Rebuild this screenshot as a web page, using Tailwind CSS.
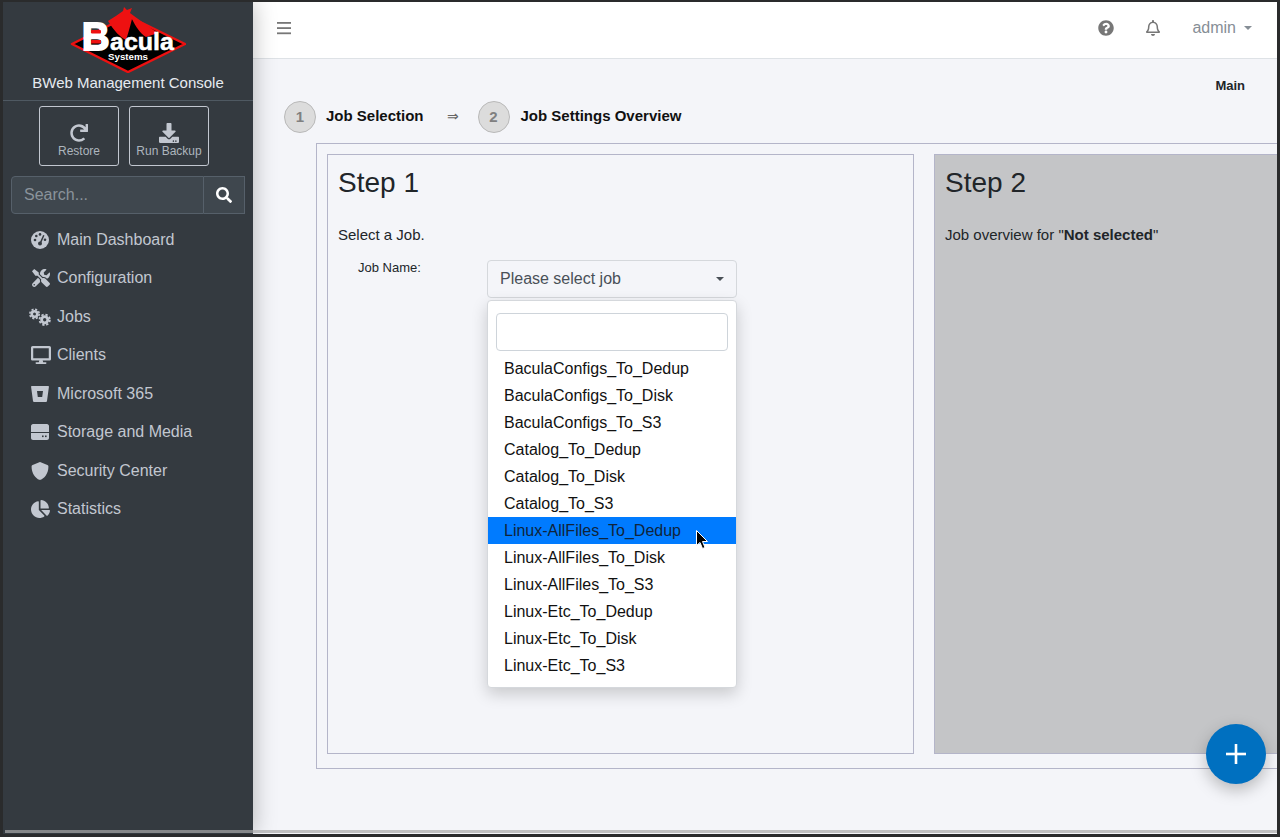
<!DOCTYPE html>
<html>
<head>
<meta charset="utf-8">
<title>BWeb Management Console</title>
<script src="https://cdn.jsdelivr.net/npm/@tailwindcss/browser@4"></script>
</head>
<body class="m-0 overflow-hidden">
<div class="relative w-[1280px] h-[837px] overflow-hidden bg-[#2a2b2c] pl-[3px] pr-[3px] pt-[2px] pb-[3px] font-['Liberation_Sans',Arial,sans-serif] text-[#212529] text-[15px]">
  <div class="relative flex h-full w-full overflow-hidden bg-[#f4f5f9]">
    <!-- sidebar -->
    <aside class="relative z-10 w-[250px] shrink-0 bg-[#343a40] shadow-[0_0_22px_rgba(0,0,0,0.28)] flex flex-col">
      <div class="h-[99px] shrink-0 border-b border-[#4f5962] flex flex-col items-center">
        <svg class="mt-[5px] block" width="116" height="66" viewBox="0 0 116 66">
          <polygon points="2,37 58,9 115,37 58,65" fill="#000" stroke="#ee1111" stroke-width="2.5" stroke-linejoin="round"/>
          <path d="M38 14 C44 10 49 7 53 4 L54 0 L57 3 L62 1 L60 6 C68 12 76 18 88 26 L76 30 C70 26 66 20 62 12 C60 20 58 27 56 33 C50 30 44 24 38 14 Z" fill="#ee1111"/>
          <text x="12" y="43" font-family="Liberation Sans" font-weight="700" font-size="38" fill="#fff" stroke="#fff" stroke-width="2">B</text>
          <rect x="21" y="23" width="10" height="3.5" rx="1" fill="#ee1111"/>
          <rect x="21" y="33" width="10" height="3.5" rx="1" fill="#ee1111"/>
          <text x="40" y="43" font-family="Liberation Sans" font-weight="700" font-size="23" textLength="64" lengthAdjust="spacingAndGlyphs" fill="#fff" stroke="#fff" stroke-width="0.5">acula</text>
          <text x="38" y="53" font-family="Liberation Sans" font-weight="700" font-size="9" textLength="40" lengthAdjust="spacingAndGlyphs" fill="#fff">Systems</text>
        </svg>
        <div class="text-[15px] leading-[20px] text-[#e6eaf0] whitespace-nowrap">BWeb Management Console</div>
      </div>
      <div class="flex gap-[10px] pt-[5px] pl-[36px]">
        <a class="w-[80px] h-[60px] border border-[#c2c7d0] rounded-[3px] flex flex-col items-center justify-center text-[#adb5bd] text-[12px] leading-[14px]">
          <svg class="w-[18px] h-[18px] mt-[9px] mb-[2px]" viewBox="0 0 512 512" fill="#c2c7d0"><path d="M500.33 0h-47.41a12 12 0 0 0-12 12.57l4 82.76A247.42 247.42 0 0 0 256 8C119.34 8 7.9 119.53 8 256.19 8.1 393.07 119.1 504 256 504a247.1 247.1 0 0 0 166.18-63.91 12 12 0 0 0 .48-17.43l-34-34a12 12 0 0 0-16.38-.55A176 176 0 1 1 402.1 157.8l-101.53-4.87a12 12 0 0 0-12.57 12v47.41a12 12 0 0 0 12 12h200.33a12 12 0 0 0 12-12V12a12 12 0 0 0-12-12z"/></svg>
          <span>Restore</span>
        </a>
        <a class="w-[80px] h-[60px] border border-[#c2c7d0] rounded-[3px] flex flex-col items-center justify-center text-[#adb5bd] text-[12px] leading-[14px]">
          <svg class="w-[20px] h-[20px] mt-[9px] mb-[1px]" viewBox="0 0 512 512" fill="#c2c7d0"><path d="M216 0h80c13.3 0 24 10.7 24 24v168h87.7c17.8 0 26.7 21.5 14.1 34.1L269.7 378.3c-7.5 7.5-19.8 7.5-27.3 0L90.1 226.1c-12.6-12.6-3.7-34.1 14.1-34.1H192V24c0-13.3 10.7-24 24-24zm296 376v112c0 13.3-10.7 24-24 24H24c-13.3 0-24-10.7-24-24V376c0-13.3 10.7-24 24-24h146.7l49 49c20.1 20.1 52.5 20.1 72.6 0l49-49H488c13.3 0 24 10.7 24 24zm-124 88c0-11-9-20-20-20s-20 9-20 20 9 20 20 20 20-9 20-20zm64 0c0-11-9-20-20-20s-20 9-20 20 9 20 20 20 20-9 20-20z"/></svg>
          <span>Run Backup</span>
        </a>
      </div>
      <div class="mt-[10px] ml-[8px] w-[234px] h-[38px] flex">
        <div class="w-[193px] h-full bg-[#3f474e] border border-[#56606a] rounded-l-[4px] pl-[12px] leading-[36px] text-[16px] text-[#8a939b]">Search...</div>
        <div class="flex-1 h-full bg-[#3f474e] border border-l-0 border-[#56606a] flex items-center justify-center">
          <svg class="w-[16px] h-[16px]" viewBox="0 0 512 512" fill="#fff"><path d="M505 442.7L405.3 343c-4.5-4.5-10.6-7-17-7H372c27.6-35.3 44-79.7 44-128C416 93.1 322.9 0 208 0S0 93.1 0 208s93.1 208 208 208c48.3 0 92.7-16.4 128-44v16.3c0 6.4 2.5 12.5 7 17l99.7 99.7c9.4 9.4 24.6 9.4 33.9 0l28.3-28.3c9.4-9.4 9.4-24.6.1-34zM208 336c-70.7 0-128-57.2-128-128 0-70.7 57.2-128 128-128 70.7 0 128 57.2 128 128 0 70.7-57.2 128-128 128z"/></svg>
        </div>
      </div>
      <nav class="mt-[6.5px] flex flex-col text-[16px] text-[#c2c7d0]">
        <a class="h-[38.5px] flex items-center"><span class="w-[54px] flex justify-end pr-[8px]">
          <svg class="w-[18px] h-[18px]" viewBox="0 0 18 18"><circle cx="9" cy="9" r="9" fill="#c2c7d0"/><circle cx="4" cy="9" r="1.3" fill="#343a40"/><circle cx="5.3" cy="5" r="1.3" fill="#343a40"/><circle cx="9" cy="3.4" r="1.3" fill="#343a40"/><circle cx="14" cy="8.8" r="1.3" fill="#343a40"/><path d="M12.8 4.2 L9.6 11.5" stroke="#343a40" stroke-width="1.5"/><circle cx="9" cy="12.5" r="2" fill="#343a40"/></svg>
        </span>Main Dashboard</a>
        <a class="h-[38.5px] flex items-center"><span class="w-[54px] flex justify-end pr-[7px]">
          <svg class="w-[18px] h-[18px]" viewBox="0 0 512 512" fill="#c2c7d0"><path d="M501.1 395.7L384 278.6c-23.1-23.1-57.6-27.6-85.4-13.9L192 158.1V96L64 0 0 64l96 128h62.1l106.6 106.6c-13.6 27.8-9.2 62.3 13.9 85.4l117.1 117.1c14.6 14.6 38.2 14.6 52.7 0l52.7-52.7c14.5-14.6 14.5-38.2 0-52.7zM331.7 225c28.3 0 54.9 11 74.9 31l19.4 19.4c15.8-6.9 30.8-16.5 43.8-29.5 37.1-37.1 49.7-89.3 37.9-136.7-2.2-9-13.5-12.1-20.1-5.5l-74.4 74.4-67.9-11.3L334 98.9l74.4-74.4c6.6-6.6 3.4-17.9-5.7-20.2-47.4-11.7-99.6.9-136.6 37.9-28.5 28.5-41.9 66.1-41.2 103.6l82.1 82.1c8.1-1.9 16.5-2.9 24.7-2.9zm-103.9 82l-56.7-56.7L18.7 402.8c-25 25-25 65.5 0 90.5s65.5 25 90.5 0l123.6-123.6c-7.6-19.9-9.9-41.6-5-62.7zM64 472c-13.2 0-24-10.8-24-24 0-13.3 10.7-24 24-24s24 10.7 24 24c0 13.2-10.7 24-24 24z"/></svg>
        </span>Configuration</a>
        <a class="h-[38.5px] flex items-center"><span class="w-[54px] flex justify-end pr-[6px]">
          <svg class="w-[22px] h-[18px]" viewBox="0 0 22 18" fill="none" stroke="#c2c7d0"><circle cx="5.5" cy="6" r="2.8" stroke-width="2.6"/><circle cx="5.5" cy="6" r="4.7" stroke-width="1.6" stroke-dasharray="2.1 1.6"/><circle cx="15.7" cy="11.8" r="3.1" stroke-width="2.8"/><circle cx="15.7" cy="11.8" r="5.2" stroke-width="1.8" stroke-dasharray="2.3 1.8"/></svg>
        </span>Jobs</a>
        <a class="h-[38.5px] flex items-center"><span class="w-[54px] flex justify-end pr-[6px]">
          <svg class="w-[20px] h-[18px]" viewBox="0 0 576 512" fill="#c2c7d0"><path d="M528 0H48C21.5 0 0 21.5 0 48v320c0 26.5 21.5 48 48 48h192l-16 48h-72c-13.3 0-24 10.7-24 24s10.7 24 24 24h272c13.3 0 24-10.7 24-24s-10.7-24-24-24h-72l-16-48h192c26.5 0 48-21.5 48-48V48c0-26.5-21.5-48-48-48zm-16 352H64V64h448v288z"/></svg>
        </span>Clients</a>
        <a class="h-[38.5px] flex items-center"><span class="w-[54px] flex justify-end pr-[8px]">
          <svg class="w-[18px] h-[16px]" viewBox="0 0 18 16"><path fill="#c2c7d0" fill-rule="evenodd" d="M1 0 H17 C17.6 0 18 .4 17.9 1 L16 15 C15.9 15.6 15.5 16 15 16 H3 C2.5 16 2.1 15.6 2 15 L.1 1 C0 .4 .4 0 1 0 Z M6 5 L6.8 11 H11.2 L12 5 Z"/></svg>
        </span>Microsoft 365</a>
        <a class="h-[38.5px] flex items-center"><span class="w-[54px] flex justify-end pr-[8px]">
          <svg class="w-[18px] h-[16px]" viewBox="0 0 18 16"><path fill="#c2c7d0" d="M2 0 H16 C17 0 18 1 18 2 V8 H0 V2 C0 1 1 0 2 0 Z M0 9 H18 V14 C18 15 17 16 16 16 H2 C1 16 0 15 0 14 Z"/><rect x="11" y="11.5" width="1.6" height="1.6" fill="#343a40"/><rect x="14" y="11.5" width="1.6" height="1.6" fill="#343a40"/></svg>
        </span>Storage and Media</a>
        <a class="h-[38.5px] flex items-center"><span class="w-[54px] flex justify-end pr-[8px]">
          <svg class="w-[18px] h-[18px]" viewBox="0 0 512 512" fill="#c2c7d0"><path d="M466.5 83.7l-192-80a48.15 48.15 0 0 0-36.9 0l-192 80C27.7 91.1 16 108.6 16 128c0 198.5 114.5 335.7 221.5 380.3 11.8 4.9 25.1 4.9 36.9 0C360.1 472.6 496 349.3 496 128c0-19.4-11.7-36.9-29.5-44.3z"/></svg>
        </span>Security Center</a>
        <a class="h-[38.5px] flex items-center"><span class="w-[54px] flex justify-end pr-[7px]">
          <svg class="w-[19px] h-[18px]" viewBox="0 0 544 512" fill="#c2c7d0"><path d="M527.79 288H290.5l158.03 158.03c6.04 6.04 15.98 6.53 22.19.68 38.7-36.46 65.32-85.61 73.13-140.86 1.34-9.46-6.51-17.85-16.06-17.85zm-15.83-64.8C503.72 103.74 408.26 8.28 288.8.04 279.68-.59 272 7.1 272 16.24V240h223.77c9.14 0 16.82-7.68 16.19-16.8zM224 288V50.71c0-9.55-8.39-17.4-17.84-16.06C86.99 51.49-4.1 155.6.14 280.37 4.5 408.51 114.83 513.59 243.03 511.98c50.4-.63 96.97-16.87 135.26-44.03 7.9-5.6 8.42-17.23 1.57-24.08L224 288z"/></svg>
        </span>Statistics</a>
      </nav>
    </aside>

    <!-- main -->
    <main class="relative flex-1 min-w-0 overflow-hidden">
      <header class="h-[57px] bg-white border-b border-[#dee2e6] flex items-center pl-[24px] pr-[25px] pb-[5px]">
        <svg class="w-[14px] h-[14px] mr-auto" viewBox="0 0 14 14" fill="#777"><rect y="1" width="14" height="1.8"/><rect y="6.2" width="14" height="1.8"/><rect y="11.4" width="14" height="1.8"/></svg>
        <svg class="w-[16px] h-[16px]" viewBox="0 0 512 512" fill="#777"><path d="M504 256c0 136.997-111.043 248-248 248S8 392.997 8 256C8 119.083 119.043 8 256 8s248 111.083 248 248zM262.655 90c-54.497 0-89.255 22.957-116.549 63.758-3.536 5.286-2.353 12.415 2.715 16.258l34.699 26.31c5.205 3.947 12.621 3.008 16.665-2.122 17.864-22.658 30.113-35.797 57.303-35.797 20.429 0 45.698 13.148 45.698 32.958 0 14.976-12.363 22.667-32.534 33.976C247.128 238.528 216 254.941 216 296v4c0 6.627 5.373 12 12 12h56c6.627 0 12-5.373 12-12v-1.333c0-28.462 83.186-29.647 83.186-106.667 0-58.002-60.165-102-116.531-102zM256 338c-25.365 0-46 20.635-46 46 0 25.364 20.635 46 46 46s46-20.636 46-46c0-25.365-20.635-46-46-46z"/></svg>
        <svg class="w-[14px] h-[16px] ml-[32px]" viewBox="0 0 448 512" fill="#777"><path d="M439.39 362.29c-19.32-20.76-55.47-51.99-55.47-154.29 0-77.7-54.48-139.9-127.94-155.16V32c0-17.67-14.32-32-31.98-32s-31.98 14.33-31.98 32v20.84C118.56 68.1 64.08 130.3 64.08 208c0 102.3-36.15 133.53-55.47 154.29-6 6.45-8.66 14.16-8.61 21.71.11 16.4 12.98 32 32.1 32h383.8c19.12 0 32-15.6 32.1-32 .05-7.55-2.61-15.27-8.61-21.71zM67.53 368c21.22-27.97 44.42-74.33 44.53-159.42 0-.2-.06-.38-.06-.58 0-61.86 50.14-112 112-112s112 50.14 112 112c0 .2-.06.38-.06.58.11 85.1 23.31 131.46 44.53 159.42H67.53zM224 512c35.32 0 63.97-28.65 63.97-64H160.03c0 35.35 28.65 64 63.97 64z"/></svg>
        <span class="ml-[32px] text-[16px] text-[#868e96]">admin</span>
        <span class="ml-[8px] w-0 h-0 border-x-[4px] border-x-transparent border-t-[4px] border-t-[#868e96]"></span>
      </header>

      <div class="relative h-[772px]">
        <div class="pr-[32px] pt-[19px] text-right text-[13px] leading-[15px] font-bold">Main</div>
        <div class="flex items-center h-[32px] mt-[8px] ml-[31px]">
          <span class="w-[32px] h-[32px] rounded-full bg-[#dcdcdc] border border-[#b9b9b9] flex items-center justify-center font-bold text-[#808080]">1</span>
          <span class="ml-[10px] pb-[2px] font-bold text-[#111]">Job Selection</span>
          <span class="ml-[23px] text-[14px] text-[#666] w-[31px] pb-[1px]">⇒</span>
          <span class="w-[32px] h-[32px] rounded-full bg-[#dcdcdc] border border-[#b9b9b9] flex items-center justify-center font-bold text-[#808080]">2</span>
          <span class="ml-[11px] pb-[2px] font-bold text-[#111]">Job Settings Overview</span>
        </div>
        <div class="ml-[63px] mt-[10px] w-[1100px] h-[626px] border border-[#b4b5c9] p-[10px] flex gap-[20px]">
          <section class="w-[587px] h-[600px] shrink-0 border border-[#b4b5c9] px-[10px] relative">
            <h2 class="text-[28px] leading-[34px] mt-[11px]">Step 1</h2>
            <p class="mt-[26px] leading-[18px]">Select a Job.</p>
            <div class="relative mt-[16px] flex">
              <label class="ml-[20px] w-[129px] text-[13px] leading-[15px]">Job Name:</label>
              <div class="relative w-[250px] h-[38px] border border-[#d5d8dc] rounded-[4px] flex items-center justify-between pl-[12px] pr-[12px] text-[16px] text-[#495057]">
                <span>Please select job</span>
                <span class="w-0 h-0 border-x-[4px] border-x-transparent border-t-[4px] border-t-[#495057]"></span>
              </div>
            </div>
          </section>
          <section class="w-[560px] h-[600px] shrink-0 border border-[#b4b5c9] bg-[#c4c5c7] px-[10px]">
            <h2 class="text-[28px] leading-[34px] mt-[11px]">Step 2</h2>
            <p class="mt-[26px] leading-[18px]">Job overview for "<b>Not selected</b>"</p>
          </section>
        </div>
      </div>

      <!-- open select dropdown -->
      <div class="absolute z-20 left-[234px] top-[298px] w-[250px] h-[388px] bg-white border border-[#d5d8dc] rounded-[4px] shadow-[0_6px_16px_rgba(0,0,0,0.18)] text-[16px] text-[#111]">
        <div class="mt-[12px] mx-[8px] h-[38px] border border-[#ced4da] rounded-[4px] bg-white"></div>
        <ul class="mt-[4px]">
          <li class="h-[27px] leading-[27px] pl-[16px]">BaculaConfigs_To_Dedup</li>
          <li class="h-[27px] leading-[27px] pl-[16px]">BaculaConfigs_To_Disk</li>
          <li class="h-[27px] leading-[27px] pl-[16px]">BaculaConfigs_To_S3</li>
          <li class="h-[27px] leading-[27px] pl-[16px]">Catalog_To_Dedup</li>
          <li class="h-[27px] leading-[27px] pl-[16px]">Catalog_To_Disk</li>
          <li class="h-[27px] leading-[27px] pl-[16px]">Catalog_To_S3</li>
          <li class="h-[27px] leading-[27px] pl-[16px] bg-[#007bff] text-[#10243a]">Linux-AllFiles_To_Dedup</li>
          <li class="h-[27px] leading-[27px] pl-[16px]">Linux-AllFiles_To_Disk</li>
          <li class="h-[27px] leading-[27px] pl-[16px]">Linux-AllFiles_To_S3</li>
          <li class="h-[27px] leading-[27px] pl-[16px]">Linux-Etc_To_Dedup</li>
          <li class="h-[27px] leading-[27px] pl-[16px]">Linux-Etc_To_Disk</li>
          <li class="h-[27px] leading-[27px] pl-[16px]">Linux-Etc_To_S3</li>
        </ul>
      </div>
    </main>

    <!-- floating action button -->
    <div class="absolute z-30 left-[1203px] top-[722px] w-[60px] h-[60px] rounded-full bg-[#0070c0] shadow-[0_6px_16px_rgba(0,0,0,0.25)] flex items-center justify-center">
      <svg class="w-[20px] h-[20px]" viewBox="0 0 20 20" fill="#fff"><rect x="8.7" y="0" width="2.6" height="20"/><rect x="0" y="8.7" width="20" height="2.6"/></svg>
    </div>
    <!-- horizontal scrollbar -->
    <div class="absolute z-30 left-[2px] right-[0px] bottom-[1px] h-[3px] bg-[#a9a9a9]/70"></div>
    <!-- mouse pointer -->
    <svg class="absolute z-40 left-[693px] top-[528px]" width="13" height="20" viewBox="0 0 13 20"><path d="M.5 .5 V15.5 L4 12.5 L6.5 18.5 L9 17.5 L6.5 11.5 H11.5 Z" fill="#000" stroke="#fff" stroke-width="1"/></svg>
  </div>
</div>
</body>
</html>
